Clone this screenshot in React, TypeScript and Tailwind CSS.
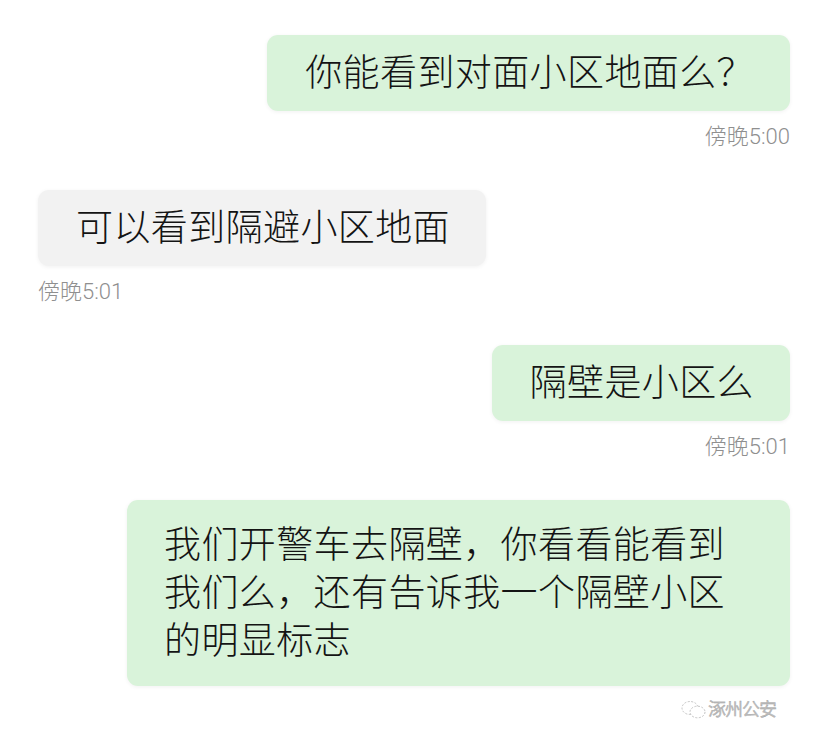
import React from "react";

const font = { fontFamily: 'Roboto, "Noto Sans CJK SC", "Noto Sans", sans-serif' };

function Bubble({ children, side, className = "" }: { children: React.ReactNode; side: "left" | "right"; className?: string }) {
  const bg = side === "right" ? "bg-[#d9f3da]" : "bg-[#f2f2f2]";
  return (
    <div
      className={`${bg} rounded-[11px] pl-[38px] pr-[36px] pt-[15px] pb-[13px] text-[37px] leading-[48px] tracking-[0.4px] font-light text-[#141414] shadow-[0_1px_4px_rgba(0,0,0,0.06)] ${className}`}
    >
      {children}
    </div>
  );
}

function Time({ children }: { children: React.ReactNode }) {
  return <div className="mt-[14px] text-[22px] leading-[24px] font-light text-[#8f8f8f]">{children}</div>;
}

export default function App() {
  return (
    <div className="w-[826px] h-[747px] bg-white overflow-hidden" style={font}>
      <div className="flex flex-col pt-[35px] pl-[38px] pr-[36px]">
        <div className="flex flex-col items-end">
          <Bubble side="right">你能看到对面小区地面么？</Bubble>
          <Time>傍晚5:00</Time>
        </div>
        <div className="flex flex-col items-start mt-[41px]">
          <Bubble side="left">可以看到隔避小区地面</Bubble>
          <Time>傍晚5:01</Time>
        </div>
        <div className="flex flex-col items-end mt-[41px]">
          <Bubble side="right">隔壁是小区么</Bubble>
          <Time>傍晚5:01</Time>
        </div>
        <div className="flex flex-col items-end mt-[41px]">
          <Bubble side="right" className="w-[663px] !pl-[37px] !pt-[22px] !pb-[20px]">
            我们开警车去隔壁，你看看能看到
            <br />
            我们么，还有告诉我一个隔壁小区
            <br />
            的明显标志
          </Bubble>
          <div className="flex items-center gap-[1px] mt-[14px] mr-[14px] text-[18px] leading-[20px] text-[#bdbdbd]">
            <svg width="26" height="20" viewBox="0 0 26 20" fill="none" stroke="#c4c4c4" strokeWidth="1" strokeDasharray="2 1.5">
              <ellipse cx="9" cy="8" rx="8" ry="6.5" />
              <ellipse cx="16.5" cy="12" rx="7.5" ry="5.8" fill="white" />
            </svg>
            <span className="tracking-[-1px]" style={{ WebkitTextStroke: "0.3px #9e9e9e" }}>涿州公安</span>
          </div>
        </div>
      </div>
    </div>
  );
}
